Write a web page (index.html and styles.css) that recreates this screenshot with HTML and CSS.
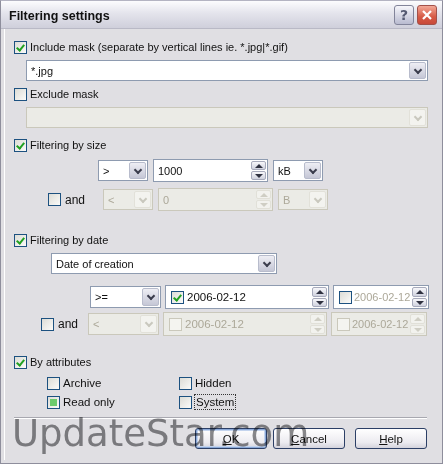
FILE: index.html
```html
<!DOCTYPE html>
<html>
	<head>
		<meta charset="UTF-8">
		<title>Filtering settings</title>
		<link rel="stylesheet" href="styles.css">
	</head>
	<body>
		<div class="win">
			<div class="title">
				<span class="caption">Filtering settings</span>
				<span class="tbtn help">?</span>
				<span class="tbtn close">
					<svg width="12" height="12" viewBox="0 0 12 12"><path d="M2 2L10 10M10 2L2 10" stroke="#fff" stroke-width="2.2"/></svg>
				</span>
			</div>
			<div class="client">
				<!-- include mask -->
				<label class="chk-row"><span class="cb on"></span>Include mask (separate by vertical lines ie. *.jpg|*.gif)</label>
				<div class="combo mask"><span class="val">*.jpg</span><span class="drop"></span></div>

				<label class="chk-row gap7"><span class="cb"></span>Exclude mask</label>
				<div class="combo mask dis"><span class="val"></span><span class="drop"></span></div>

				<!-- size -->
				<label class="chk-row gap11"><span class="cb on"></span>Filtering by size</label>
				<div class="row size-row">
					<div class="combo op"><span class="val">&gt;</span><span class="drop"></span></div>
					<div class="spin num"><span class="val">1000</span><span class="arrows"><span class="up"></span><span class="down"></span></span></div>
					<div class="combo unit"><span class="val">kB</span><span class="drop"></span></div>
				</div>
				<div class="row size-and">
					<label class="and"><span class="cb"></span>and</label>
					<div class="combo op dis"><span class="val">&lt;</span><span class="drop"></span></div>
					<div class="spin num dis"><span class="val">0</span><span class="arrows"><span class="up"></span><span class="down"></span></span></div>
					<div class="combo unit dis"><span class="val">B</span><span class="drop"></span></div>
				</div>

				<!-- date -->
				<label class="chk-row gap-date"><span class="cb on"></span>Filtering by date</label>
				<div class="combo kind"><span class="val">Date of creation</span><span class="drop"></span></div>
				<div class="row date-row">
					<div class="combo op2"><span class="val">&gt;=</span><span class="drop"></span></div>
					<div class="spin date"><span class="cb on"></span><span class="val">2006-02-12</span><span class="arrows"><span class="up"></span><span class="down"></span></span></div>
					<div class="spin date short"><span class="cb"></span><span class="val grey">2006-02-12</span><span class="arrows"><span class="up"></span><span class="down"></span></span></div>
				</div>
				<div class="row date-and">
					<label class="and"><span class="cb"></span>and</label>
					<div class="combo op2 dis"><span class="val">&lt;</span><span class="drop"></span></div>
					<div class="spin date dis"><span class="cb"></span><span class="val">2006-02-12</span><span class="arrows"><span class="up"></span><span class="down"></span></span></div>
					<div class="spin date short dis"><span class="cb"></span><span class="val">2006-02-12</span><span class="arrows"><span class="up"></span><span class="down"></span></span></div>
				</div>

				<!-- attributes -->
				<label class="chk-row gap-attr"><span class="cb on"></span>By attributes</label>
				<div class="attrs">
					<label class="chk-row"><span class="cb"></span>Archive</label>
					<label class="chk-row"><span class="cb"></span>Hidden</label>
					<label class="chk-row"><span class="cb part"></span>Read only</label>
					<label class="chk-row"><span class="cb"></span><span class="focus">System</span></label>
				</div>

				<div class="sep"></div>
				<div class="buttons">
					<span class="btn def"><u>O</u>K</span>
					<span class="btn"><u>C</u>ancel</span>
					<span class="btn help-btn"><u>H</u>elp</span>
				</div>
			</div>
			<div class="mark">UpdateStar.com</div>
		</div>
	</body>
</html>
```

FILE: styles.css
```css
*{
	margin:0;
	padding:0;
	box-sizing:border-box;
}
body{
	width:443px;
	height:464px;
	overflow:hidden;
	font-family:"Liberation Sans",Arial,sans-serif;
	font-size:11px;
	line-height:14px;
	color:#111;
	background:#c9c9d3;
}
.win{
	width:443px;
	height:464px;
	position:relative;
	border:1px solid #8e8e9c;
	border-top-color:#b4b4c2;
	background:#e0dfe3;
	padding:0 3px 3px 3px;
	display:flex;
	flex-direction:column;
}
.title{
	height:28px;
	margin:0 -3px;
	display:flex;
	align-items:center;
	padding:0 5px 0 8px;
	background:linear-gradient(#fcfcfe 0%,#e4e4ec 45%,#cfcfdb 100%);
	border-bottom:1px solid #b9b9c6;
}
.caption{
	flex:1;
	font-weight:bold;
	font-size:12.5px;
	color:#111;
	margin-top:2px;
}
.tbtn{
	width:20px;
	height:20px;
	border-radius:3px;
	display:flex;
	align-items:center;
	justify-content:center;
	margin-left:3px;
}
.help{
	background:linear-gradient(#f6f6fb,#b9bbd0);
	border:1px solid #82849a;
	color:#555a72;
	font-family:"DejaVu Sans",sans-serif;
	font-weight:bold;
	font-size:14px;
}
.close{
	background:linear-gradient(#f2a897,#d65a45 60%,#c8493a);
	border:1px solid #a2514a;
}
.client{
	flex:1;
	padding:11px 12px 0 9px;
	border-left:1px solid #fff;
	display:flex;
	flex-direction:column;
}

/* checkbox */
.chk-row{
	display:flex;
	align-items:center;
	height:14px;
	white-space:nowrap;
}
.cb{
	width:13px;
	height:13px;
	border:1px solid #1c5180;
	background:linear-gradient(135deg,#dcdcd6,#fbfbf9);
	margin-right:3px;
	flex:none;
	position:relative;
}
.cb.on::after{
	content:"";
	position:absolute;
	left:2px;
	top:1px;
	width:3px;
	height:6px;
	border:solid #21a121;
	border-width:0 2px 2px 0;
	transform:translate(1px,0) rotate(40deg);
}
.cb.part::after{
	content:"";
	position:absolute;
	left:2px;
	top:2px;
	width:7px;
	height:7px;
	background:#6ccb6c;
}
.gap7{margin-top:6px;}
.gap11{margin-top:10px;}
.gap-date{margin-top:22px;}
.gap-attr{margin-top:19px;}

/* combo */
.combo,.spin{
	display:flex;
	align-items:center;
	background:#fff;
	border:1px solid #8e9bb0;
	height:21px;
	padding:1px;
	flex:none;
}
.combo .val,.spin .val{
	flex:1;
	padding-left:3px;
	white-space:nowrap;
	overflow:hidden;
}
.drop{
	width:17px;
	height:100%;
	border:1px solid #b8bccc;
	border-radius:2px;
	background:linear-gradient(#eeeef4,#c5c7d6);
	position:relative;
	flex:none;
}
.drop::after{
	content:"";
	position:absolute;
	left:5px;
	top:4px;
	width:4px;
	height:4px;
	border:solid #3b3d4d;
	border-width:0 2px 2px 0;
	transform:rotate(45deg);
}
.mask{
	width:402px;
	margin:6px 0 0 12px;
}
.dis{
	background:#ebebe6;
	border-color:#cac8bb;
	color:#aca899;
}
.dis .drop{
	background:#f3f3ef;
	border-color:#e2e1d9;
}
.dis .drop::after{
	border-color:#c9c8be;
}
.dis .cb{
	border-color:#cac8bb;
	background:#f4f4f0;
}

/* spin */
.arrows{
	width:15px;
	height:100%;
	display:flex;
	flex-direction:column;
	gap:1px;
	flex:none;
}
.arrows span{
	flex:1;
	border:1px solid #a7aabb;
	border-radius:2px;
	background:linear-gradient(#f7f7fa,#d0d2de);
	position:relative;
}
.arrows .up::after,.arrows .down::after{
	content:"";
	position:absolute;
	left:3px;
	width:0;
	height:0;
	border-left:4px solid transparent;
	border-right:4px solid transparent;
}
.arrows .up::after{
	top:2px;
	border-bottom:4px solid #2f3140;
}
.arrows .down::after{
	top:2px;
	border-top:4px solid #2f3140;
}
.dis .arrows span{
	background:#f2f2ee;
	border-color:#e1e0d8;
}
.dis .arrows .up::after{border-bottom-color:#cfcec4;}
.dis .arrows .down::after{border-top-color:#cfcec4;}

.row{
	display:flex;
	align-items:center;
}
.size-row{
	margin:7px 0 0 84px;
	height:23px;
	gap:5px;
}
.size-and{
	margin:6px 0 0 34px;
	height:23px;
	gap:5px;
}
.and{
	display:flex;
	align-items:center;
	width:50px;
	font-size:12px;
}
.and .cb{margin-right:4px;}
.op{width:50px;}
.num{width:115px;height:23px;}
.unit{width:50px;}
.kind{
	width:226px;
	height:21px;
	margin:6px 0 0 37px;
}
.date-row{
	margin:11px 0 0 76px;
	height:24px;
	gap:4px;
}
.date-and{
	margin:3px 0 0 27px;
	height:24px;
	gap:4px;
}
.date-and .and{width:49px;}
.op2{width:71px;height:22px;}
.date{
	width:164px;
	height:24px;
	padding-left:5px;
	font-size:11.5px;
}
.date .cb{margin-right:1px;}
.date .val{padding-left:2px;overflow:hidden;}
.date.short{width:96px;}
.date.short .val{padding-left:1px;font-size:11px;}
.grey{color:#aca899;}

/* attributes */
.attrs{
	display:grid;
	grid-template-columns:132px 120px;
	row-gap:5px;
	margin:7px 0 0 33px;
	font-size:11.5px;
}
.attrs .chk-row{height:14px;}
.focus{
	outline:1px dotted #333;
	padding:0 1px;
}

.sep{
	margin:8px 0 0 0;
	height:2px;
	border-top:1px solid #a8a8b0;
	border-bottom:1px solid #fff;
}
.buttons{
	display:flex;
	justify-content:flex-end;
	gap:6px;
	margin-top:9px;
}
.btn{
	width:72px;
	height:21px;
	border:1px solid #2c3f66;
	border-radius:3px;
	background:linear-gradient(#ffffff,#ecebf0 70%,#d4d3dc);
	display:flex;
	align-items:center;
	justify-content:center;
	font-size:11.5px;
}
.btn.def{
	box-shadow:inset 0 0 0 1px #8aa8d8,inset 0 0 0 2px #c4d4ee;
}
.help-btn{margin-left:4px;}

.mark{
	position:absolute;
	left:11px;
	top:409px;
	font-family:"DejaVu Sans",sans-serif;
	font-size:37px;
	line-height:48px;
	color:#8a8a8c;
	mix-blend-mode:multiply;
	pointer-events:none;
}
```
